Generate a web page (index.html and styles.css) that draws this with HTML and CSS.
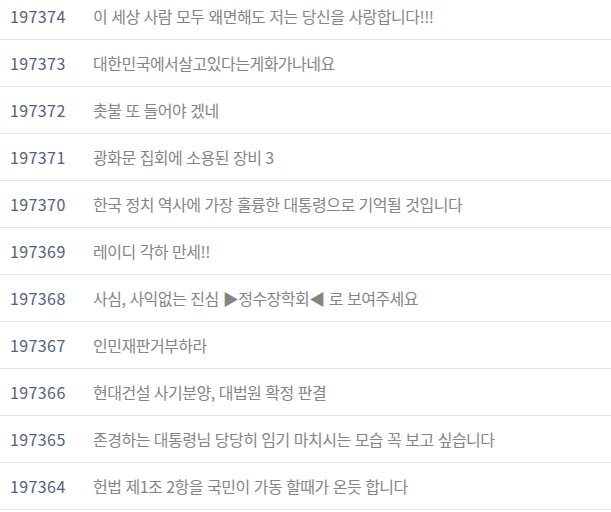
FILE: index.html
```html
<!DOCTYPE html>
<html lang="ko">
<head>
    <meta charset="UTF-8">
    <title>게시판</title>
    <link rel="stylesheet" href="styles.css">
</head>
<body>
    <ul class="board">
        <li class="row"><span class="num">197374</span><span class="subject">이 세상 사람 모두 왜면해도 저는 당신을 사랑합니다!!!</span></li>
        <li class="row"><span class="num">197373</span><span class="subject">대한민국에서살고있다는게화가나네요</span></li>
        <li class="row"><span class="num">197372</span><span class="subject">촛불 또 들어야 겠네</span></li>
        <li class="row"><span class="num">197371</span><span class="subject">광화문 집회에 소용된 장비 3</span></li>
        <li class="row"><span class="num">197370</span><span class="subject">한국 정치 역사에 가장 훌륭한 대통령으로 기억될 것입니다</span></li>
        <li class="row"><span class="num">197369</span><span class="subject">레이디 각하 만세!!</span></li>
        <li class="row"><span class="num">197368</span><span class="subject">사심, 사익없는 진심 ▶정수장학회◀ 로 보여주세요</span></li>
        <li class="row"><span class="num">197367</span><span class="subject">인민재판거부하라</span></li>
        <li class="row"><span class="num">197366</span><span class="subject">현대건설 사기분양, 대법원 확정 판결</span></li>
        <li class="row"><span class="num">197365</span><span class="subject">존경하는 대통령님 당당히 임기 마치시는 모습 꼭 보고 싶습니다</span></li>
        <li class="row"><span class="num">197364</span><span class="subject">헌법 제1조 2항을 국민이 가동 할때가 온듯 합니다</span></li>
    </ul>
</body>
</html>
```

FILE: styles.css
```css
body {
    margin: 0;
    background-color: #fff;
    font-family: "Noto Sans CJK KR", "Noto Sans", sans-serif;
    overflow: hidden;
}

.board {
    list-style-type: none;
    margin: -7px 0 0 0;
    padding: 0;
}

.row {
    display: flex;
    align-items: center;
    height: 46px;
    border-bottom: 1px solid #e5e5e5;
    font-size: 16px;
}

.num {
    width: 83px;
    padding-left: 10px;
    color: #52617d;
    letter-spacing: 0.4px;
}

.subject {
    color: #858585;
    letter-spacing: -0.5px;
}
```
